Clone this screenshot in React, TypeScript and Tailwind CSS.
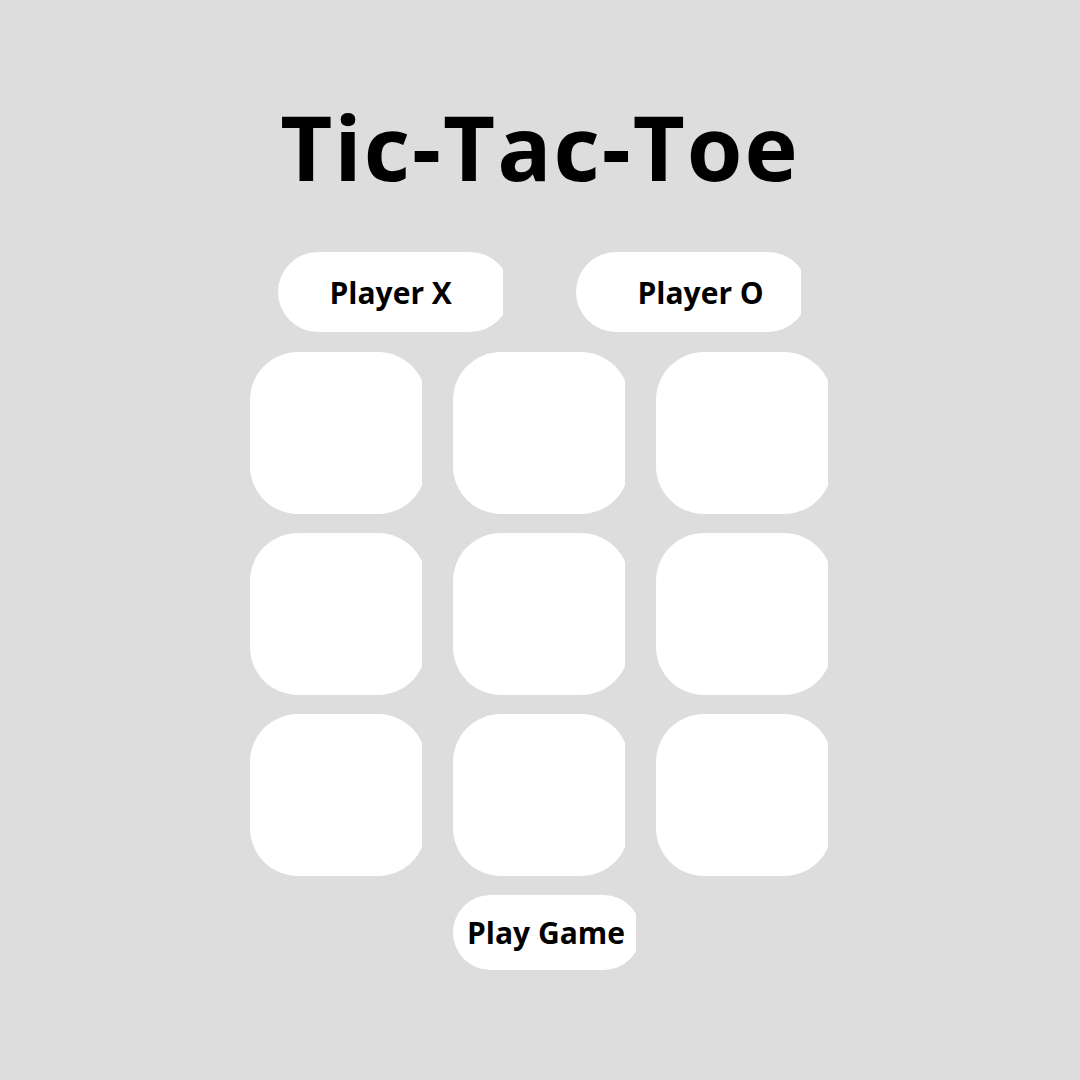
import React from "react";

const font = { fontFamily: '"Open Sans", "Liberation Sans", sans-serif' };

// white shape whose right side is cut a little flat, like in the picture
const Clipped = ({
  outer,
  inner,
  children,
}: {
  outer: string;
  inner: string;
  children?: React.ReactNode;
}) => (
  <div className={`overflow-hidden shrink-0 ${outer}`}>
    <div className={`h-full bg-white flex items-center ${inner}`}>{children}</div>
  </div>
);

export default function App() {
  const cells = Array.from({ length: 9 }, (_, i) => i);

  return (
    <div className="w-[1080px] h-[1080px] bg-[#dddddd] flex flex-col items-center pr-[2px]" style={font}>
      <h1 className="mt-[91px] h-[110px] text-[90px] leading-[110px] font-bold text-black tracking-[2px] whitespace-nowrap ml-[2px]">
        Tic-Tac-Toe
      </h1>

      <div className="mt-[51px] flex gap-[73px]">
        <Clipped outer="w-[225px] h-[80px]" inner="w-[232px] rounded-full pl-[52px]">
          <span className="text-[30px] font-bold text-black whitespace-nowrap">Player X</span>
        </Clipped>
        <Clipped outer="w-[225px] h-[80px]" inner="w-[232px] rounded-full pl-[62px]">
          <span className="text-[30px] font-bold text-black whitespace-nowrap">Player O</span>
        </Clipped>
      </div>

      <div className="mt-[20px] grid grid-cols-3 gap-x-[31px] gap-y-[19px]">
        {cells.map((c) => (
          <Clipped key={c} outer="w-[172px] h-[162px]" inner="w-[176px] rounded-[48px]" />
        ))}
      </div>

      <div className="mt-[19px] ml-[11px]">
        <Clipped outer="w-[183px] h-[75px]" inner="w-[188px] rounded-full pl-[14px]">
          <span className="text-[30px] font-bold text-black whitespace-nowrap">Play Game</span>
        </Clipped>
      </div>
    </div>
  );
}
